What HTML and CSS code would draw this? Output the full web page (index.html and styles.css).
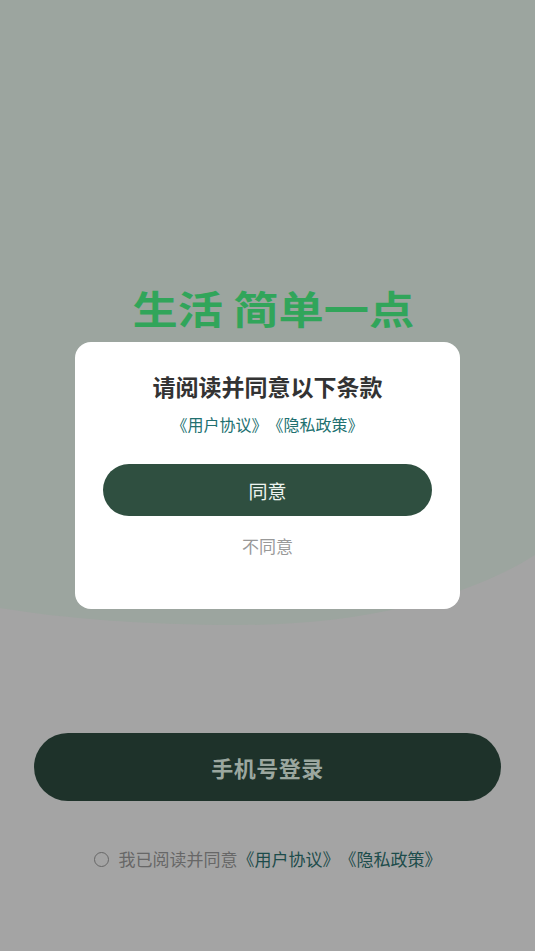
FILE: index.html
```html
<!DOCTYPE html>
<html lang="zh-CN">
<head>
<meta charset="utf-8">
<title>登录</title>
<link rel="stylesheet" href="styles.css">
</head>
<body>
<div class="screen">
  <svg class="bg-shape" width="535" height="951" viewBox="0 0 535 951" aria-hidden="true">
    <path d="M0 0 H535 V555 C480 590 380 625 240 625 C140 625 60 618 0 608 Z" fill="#9ca59f"/>
  </svg>
  <main class="content">
    <h1 class="slogan">生活 简单一点</h1>
    <button class="login-btn" type="button">手机号登录</button>
    <div class="agree-row">
      <span class="radio"></span>
      <span class="agree-text">我已阅读并同意<a class="link-dark">《用户协议》</a><a class="link-dark">《隐私政策》</a></span>
    </div>
  </main>
  <div class="overlay">
    <div class="dialog">
      <h2 class="dialog-title">请阅读并同意以下条款</h2>
      <p class="dialog-links"><a class="link">《用户协议》</a><a class="link">《隐私政策》</a></p>
      <button class="agree-btn" type="button">同意</button>
      <button class="disagree-btn" type="button">不同意</button>
    </div>
  </div>
</div>
</body>
</html>
```
FILE: styles.css
```css
* { box-sizing: border-box; }
html, body { margin: 0; padding: 0; }
body {
  font-family: "Noto Sans CJK SC", "Noto Sans", sans-serif;
  background: #a4a4a4;
  text-spacing-trim: space-all;
}
.screen {
  position: relative;
  width: 535px;
  height: 951px;
  overflow: hidden;
  background: #a4a4a4;
}
.bg-shape {
  position: absolute;
  left: 0;
  top: 0;
  display: block;
}
.content {
  position: relative;
  display: flex;
  flex-direction: column;
  align-items: center;
  padding-top: 281px;
}
.slogan {
  margin: 0 0 0 11px;
  font-size: 39px;
  line-height: 52px;
  font-weight: 700;
  color: #31a55a;
  transform: scaleX(1.16);
}
.login-btn {
  margin-top: 400px;
  width: 467px;
  height: 68px;
  border: 0;
  border-radius: 34px;
  background: #1e322a;
  color: #9ba79f;
  font-family: inherit;
  font-size: 22px;
  font-weight: 700;
  letter-spacing: 0.5px;
}
.agree-row {
  margin-top: 46px;
  display: flex;
  align-items: center;
  height: 24px;
  gap: 10px;
}
.radio {
  width: 15px;
  height: 15px;
  border: 1.5px solid #676767;
  border-radius: 50%;
}
.agree-text {
  font-size: 17px;
  line-height: 24px;
  color: #676767;
}
.link-dark { color: #1d4c4b; }
.overlay {
  position: absolute;
  inset: 0;
  display: flex;
  align-items: center;
  justify-content: center;
}
.dialog {
  width: 385px;
  height: 267px;
  background: #fff;
  border-radius: 16px;
  padding: 28px 28px 0;
  display: flex;
  flex-direction: column;
  align-items: center;
}
.dialog-title {
  margin: 0;
  font-size: 23px;
  line-height: 32px;
  font-weight: 700;
  color: #333;
}
.dialog-links {
  margin: 10px 0 0;
  font-size: 16px;
  line-height: 24px;
}
.link { color: #217070; }
.agree-btn {
  margin-top: 28px;
  width: 100%;
  height: 52px;
  border: 0;
  border-radius: 26px;
  background: #2f4f40;
  color: #eef4f0;
  font-family: inherit;
  font-size: 19px;
}
.disagree-btn {
  margin-top: 18px;
  padding: 0;
  border: 0;
  background: none;
  font-family: inherit;
  font-size: 17px;
  line-height: 24px;
  color: #999;
}
```
